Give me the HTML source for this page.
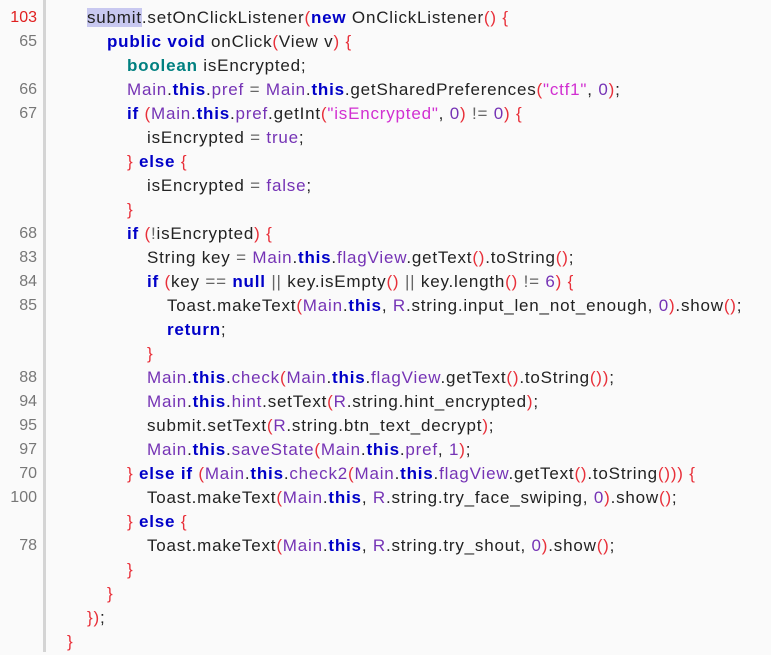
<!DOCTYPE html>
<html><head><meta charset="utf-8"><style>
html,body{margin:0;padding:0;background:#fafafa;width:771px;height:655px;overflow:hidden}
.w{position:relative;width:771px;height:655px;font-family:"Liberation Sans","Noto Sans CJK SC",sans-serif;font-size:17px;color:#222}
.g{position:absolute;left:43px;top:0;width:3px;height:652px;background:#d4d4d4}
.l{position:absolute;left:0;height:24px;line-height:24px;white-space:pre}
.n{position:absolute;left:0;width:37px;text-align:right;color:#777;font-size:16px}
.c{position:absolute;white-space:pre;letter-spacing:0.8px}
.k{color:#0000c8;font-weight:bold}
.t{color:#008080;font-weight:bold}
.p{color:#7533b5}
.r{color:#e8303a}
.s{color:#d12fd1}
.o{color:#666}
.h{background:#c8c8f0}
</style></head><body><div class="w">
<div class="g"></div>
<div class="l" style="top:6px"><span class="n" style="color:#e02020">103</span><span class="c" style="left:87px"><span class="h">submit</span>.setOnClickListener<span class="r">(</span><span class="k">new</span> OnClickListener<span class="r">()</span> <span class="r">{</span></span></div>
<div class="l" style="top:30px"><span class="n">65</span><span class="c" style="left:107px"><span class="k">public void</span> onClick<span class="r">(</span>View v<span class="r">)</span> <span class="r">{</span></span></div>
<div class="l" style="top:54px"><span class="c" style="left:127px"><span class="t">boolean</span> isEncrypted;</span></div>
<div class="l" style="top:78px"><span class="n">66</span><span class="c" style="left:127px"><span class="p">Main</span>.<span class="k">this</span>.<span class="p">pref</span> <span class="o">=</span> <span class="p">Main</span>.<span class="k">this</span>.getSharedPreferences<span class="r">(</span><span class="s">"ctf1"</span>, <span class="p">0</span><span class="r">)</span>;</span></div>
<div class="l" style="top:102px"><span class="n">67</span><span class="c" style="left:127px"><span class="k">if</span> <span class="r">(</span><span class="p">Main</span>.<span class="k">this</span>.<span class="p">pref</span>.getInt<span class="r">(</span><span class="s">"isEncrypted"</span>, <span class="p">0</span><span class="r">)</span> <span class="o">!=</span> <span class="p">0</span><span class="r">)</span> <span class="r">{</span></span></div>
<div class="l" style="top:126px"><span class="c" style="left:147px">isEncrypted <span class="o">=</span> <span class="p">true</span>;</span></div>
<div class="l" style="top:150px"><span class="c" style="left:127px"><span class="r">}</span> <span class="k">else</span> <span class="r">{</span></span></div>
<div class="l" style="top:174px"><span class="c" style="left:147px">isEncrypted <span class="o">=</span> <span class="p">false</span>;</span></div>
<div class="l" style="top:198px"><span class="c" style="left:127px"><span class="r">}</span></span></div>
<div class="l" style="top:222px"><span class="n">68</span><span class="c" style="left:127px"><span class="k">if</span> <span class="r">(</span><span class="o">!</span>isEncrypted<span class="r">)</span> <span class="r">{</span></span></div>
<div class="l" style="top:246px"><span class="n">83</span><span class="c" style="left:147px">String key <span class="o">=</span> <span class="p">Main</span>.<span class="k">this</span>.<span class="p">flagView</span>.getText<span class="r">()</span>.toString<span class="r">()</span>;</span></div>
<div class="l" style="top:270px"><span class="n">84</span><span class="c" style="left:147px"><span class="k">if</span> <span class="r">(</span>key <span class="o">==</span> <span class="k">null</span> <span class="o">||</span> key.isEmpty<span class="r">()</span> <span class="o">||</span> key.length<span class="r">()</span> <span class="o">!=</span> <span class="p">6</span><span class="r">)</span> <span class="r">{</span></span></div>
<div class="l" style="top:294px"><span class="n">85</span><span class="c" style="left:167px">Toast.makeText<span class="r">(</span><span class="p">Main</span>.<span class="k">this</span>, <span class="p">R</span>.string.input_len_not_enough, <span class="p">0</span><span class="r">)</span>.show<span class="r">()</span>;</span></div>
<div class="l" style="top:318px"><span class="c" style="left:167px"><span class="k">return</span>;</span></div>
<div class="l" style="top:342px"><span class="c" style="left:147px"><span class="r">}</span></span></div>
<div class="l" style="top:366px"><span class="n">88</span><span class="c" style="left:147px"><span class="p">Main</span>.<span class="k">this</span>.<span class="p">check</span><span class="r">(</span><span class="p">Main</span>.<span class="k">this</span>.<span class="p">flagView</span>.getText<span class="r">()</span>.toString<span class="r">())</span>;</span></div>
<div class="l" style="top:390px"><span class="n">94</span><span class="c" style="left:147px"><span class="p">Main</span>.<span class="k">this</span>.<span class="p">hint</span>.setText<span class="r">(</span><span class="p">R</span>.string.hint_encrypted<span class="r">)</span>;</span></div>
<div class="l" style="top:414px"><span class="n">95</span><span class="c" style="left:147px">submit.setText<span class="r">(</span><span class="p">R</span>.string.btn_text_decrypt<span class="r">)</span>;</span></div>
<div class="l" style="top:438px"><span class="n">97</span><span class="c" style="left:147px"><span class="p">Main</span>.<span class="k">this</span>.<span class="p">saveState</span><span class="r">(</span><span class="p">Main</span>.<span class="k">this</span>.<span class="p">pref</span>, <span class="p">1</span><span class="r">)</span>;</span></div>
<div class="l" style="top:462px"><span class="n">70</span><span class="c" style="left:127px"><span class="r">}</span> <span class="k">else if</span> <span class="r">(</span><span class="p">Main</span>.<span class="k">this</span>.<span class="p">check2</span><span class="r">(</span><span class="p">Main</span>.<span class="k">this</span>.<span class="p">flagView</span>.getText<span class="r">()</span>.toString<span class="r">()))</span> <span class="r">{</span></span></div>
<div class="l" style="top:486px"><span class="n">100</span><span class="c" style="left:147px">Toast.makeText<span class="r">(</span><span class="p">Main</span>.<span class="k">this</span>, <span class="p">R</span>.string.try_face_swiping, <span class="p">0</span><span class="r">)</span>.show<span class="r">()</span>;</span></div>
<div class="l" style="top:510px"><span class="c" style="left:127px"><span class="r">}</span> <span class="k">else</span> <span class="r">{</span></span></div>
<div class="l" style="top:534px"><span class="n">78</span><span class="c" style="left:147px">Toast.makeText<span class="r">(</span><span class="p">Main</span>.<span class="k">this</span>, <span class="p">R</span>.string.try_shout, <span class="p">0</span><span class="r">)</span>.show<span class="r">()</span>;</span></div>
<div class="l" style="top:558px"><span class="c" style="left:127px"><span class="r">}</span></span></div>
<div class="l" style="top:582px"><span class="c" style="left:107px"><span class="r">}</span></span></div>
<div class="l" style="top:606px"><span class="c" style="left:87px"><span class="r">})</span>;</span></div>
<div class="l" style="top:630px"><span class="c" style="left:67px"><span class="r">}</span></span></div>
</div></body></html>
